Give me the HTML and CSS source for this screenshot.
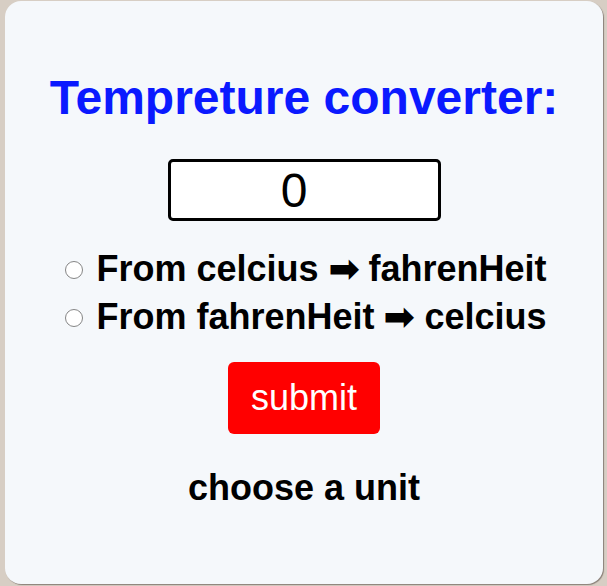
FILE: index.html
```html
<!DOCTYPE html>
<html>
<head>
<meta charset="utf-8">
<link rel="stylesheet" href="styles.css">
</head>
<body>
<div class="card">
  <h1 class="title">Tempreture converter:</h1>
  <input class="temp" type="text" value="0">
  <div class="options">
    <label class="option"><input class="radio" type="radio" name="unit"><span>From celcius ➡ fahrenHeit</span></label>
    <label class="option"><input class="radio" type="radio" name="unit"><span>From fahrenHeit ➡ celcius</span></label>
  </div>
  <button class="submit">submit</button>
  <p class="result">choose a unit</p>
</div>
</body>
</html>
```
FILE: styles.css
```css
html, body {
  margin: 0;
  padding: 0;
  height: 100%;
}
body {
  background: #d7cec4;
  font-family: "Liberation Sans", Arial, sans-serif;
  padding: 1px 4px 2px 5px;
  box-sizing: border-box;
}
.card {
  height: 100%;
  box-sizing: border-box;
  background: #f5f8fb;
  border-radius: 16px;
  box-shadow: 1px 1px 1px #8a8078;
  display: flex;
  flex-direction: column;
  align-items: center;
  padding-top: 69px;
}
.title {
  margin: 0;
  color: #0a19ff;
  font-size: 48px;
  font-weight: bold;
  line-height: 56px;
}
.temp {
  margin-top: 33px;
  width: 273px;
  height: 62px;
  box-sizing: border-box;
  border: 3px solid #000;
  border-radius: 5px;
  background: #fff;
  text-align: center;
  font-family: "Liberation Sans", Arial, sans-serif;
  font-size: 48px;
  padding: 0 20px 0 0;
  color: #000;
}
.options {
  margin-top: 24px;
  display: flex;
  flex-direction: column;
  align-items: center;
}
.option {
  font-size: 36px;
  font-weight: bold;
  line-height: 48px;
  display: flex;
  align-items: center;
  gap: 13px;
  padding-left: 4px;
}
.radio {
  appearance: none;
  -webkit-appearance: none;
  flex: 0 0 18px;
  width: 18px;
  height: 18px;
  margin: 2px 0 0 0;
  box-sizing: border-box;
  border: 1.5px solid #858585;
  border-radius: 50%;
  background: #fff;
}
.submit {
  margin-top: 21px;
  width: 152px;
  height: 72px;
  background: #ff0000;
  color: #fff;
  border: none;
  border-radius: 6px;
  font-family: "Liberation Sans", Arial, sans-serif;
  font-size: 36px;
  padding: 0;
}
.result {
  margin: 34px 0 0;
  font-size: 36px;
  font-weight: bold;
  line-height: 40px;
}
```
